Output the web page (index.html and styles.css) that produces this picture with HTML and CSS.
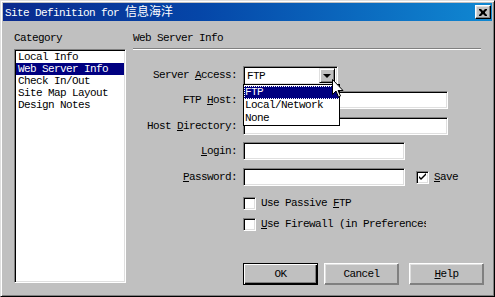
FILE: index.html
```html
<!DOCTYPE html>
<html lang="en">
<head>
    <meta charset="UTF-8">
    <title>Site Definition</title>
    <link rel="stylesheet" href="styles.css">
</head>
<body>
    <div class="window">
        <div class="title-bar">
            <span class="title-text">Site Definition for <span class="cjk">信息海洋</span></span>
            <button class="close-btn">
                <svg width="8" height="7" viewBox="0 0 8 7">
                    <path d="M0 0h2l2 2 2-2h2v1l-2 2v1l2 2v1h-2l-2-2-2 2h-2v-1l2-2v-1l-2-2z" fill="#000"/>
                </svg>
            </button>
        </div>

        <div class="main">
            <div class="side">
                <div class="caption">Category</div>
                <ul class="list-box">
                    <li>Local Info</li>
                    <li class="selected">Web Server Info</li>
                    <li>Check In/Out</li>
                    <li>Site Map Layout</li>
                    <li>Design Notes</li>
                </ul>
            </div>

            <div class="panel">
                <div class="caption">Web Server Info</div>
                <div class="rule"></div>

                <div class="form">
                    <label class="label">Server <u>A</u>ccess:</label>
                    <div class="combo-wrap">
                        <div class="combo">
                            <span class="combo-value">FTP</span>
                            <span class="combo-btn"><span class="arrow"></span></span>
                        </div>
                        <ul class="combo-list">
                            <li class="active">FTP</li>
                            <li>Local/Network</li>
                            <li>None</li>
                        </ul>
                    </div>

                    <label class="label">FTP <u>H</u>ost:</label>
                    <div class="field wide"></div>

                    <label class="label">Host <u>D</u>irectory:</label>
                    <div class="field wide"></div>

                    <label class="label"><u>L</u>ogin:</label>
                    <div class="field short"></div>

                    <label class="label"><u>P</u>assword:</label>
                    <div class="inline">
                        <div class="field short"></div>
                        <span class="check checked">
                            <svg width="9" height="9" viewBox="0 0 9 9">
                                <path d="M1 3v2l2 2 5-5v-2l-5 5z" fill="#000"/>
                            </svg>
                        </span>
                        <span class="check-text"><u>S</u>ave</span>
                    </div>

                    <div class="inline span-2">
                        <span class="check"></span>
                        <span class="check-text">Use Passive <u>F</u>TP</span>
                    </div>

                    <div class="inline span-2 clip">
                        <span class="check"></span>
                        <span class="check-text"><u>U</u>se Firewall (in Preferences)</span>
                    </div>

                    <div class="buttons span-2">
                        <button class="btn default">OK</button>
                        <button class="btn">Cancel</button>
                        <button class="btn help"><u>H</u>elp</button>
                    </div>
                </div>
            </div>
        </div>

        <svg class="cursor" width="12" height="20" viewBox="0 0 12 20">
            <path d="M0.5 0.5v15l3.5-3.5 2.5 6 2-1-2.5-5.5h5z" fill="#fff" stroke="#000" stroke-width="1"/>
        </svg>
    </div>
</body>
</html>
```

FILE: styles.css
```css
body {
    margin: 0;
    background: #c0c0c0;
}
.window {
    position: relative;
    width: 495px;
    height: 297px;
    box-sizing: border-box;
    padding: 2px;
    background: #c0c0c0;
    border: 1px solid;
    border-color: #dfdfdf #000 #000 #dfdfdf;
    box-shadow: inset 1px 1px #fff, inset -1px -1px #808080;
    font-family: "Liberation Mono", "Noto Sans CJK SC", monospace;
    font-size: 11px;
    letter-spacing: -0.6px;
    color: #000;
    overflow: hidden;
}
.title-bar {
    display: flex;
    align-items: center;
    justify-content: space-between;
    height: 18px;
    padding: 0 1px 0 2px;
    background: linear-gradient(90deg, #0a2a8e 0%, #0546a8 40%, #1088d2 100%);
    color: #fff;
}
.title-text {
    line-height: 18px;
}
.cjk {
    font-family: "Noto Sans CJK SC", sans-serif;
    font-size: 12px;
    letter-spacing: 0;
}
.close-btn {
    display: flex;
    align-items: center;
    justify-content: center;
    width: 16px;
    height: 14px;
    padding: 0;
    background: #c0c0c0;
    border: 1px solid;
    border-color: #fff #000 #000 #fff;
    box-shadow: inset -1px -1px #808080, inset 1px 1px #dfdfdf;
}
.main {
    display: grid;
    grid-template-columns: 112px 348px;
    column-gap: 7px;
    padding: 11px 0 0 11px;
}
.caption {
    line-height: 12px;
    height: 12px;
}
.list-box {
    list-style: none;
    margin: 5px 0 0;
    padding: 0 1px;
    height: 234px;
    box-sizing: border-box;
    background: #fff;
    border: 1px solid;
    border-color: #808080 #fff #fff #808080;
    box-shadow: inset 1px 1px #000, inset -1px -1px #dfdfdf;
}
.list-box li {
    line-height: 12px;
    padding-left: 2px;
    white-space: nowrap;
}
.list-box li:first-child {
    margin-top: 1px;
}
.list-box .selected {
    background: #000080;
    color: #fff;
}
.rule {
    margin-top: 4px;
    height: 0;
    border-top: 1px solid #808080;
    border-bottom: 1px solid #fff;
}
.form {
    display: grid;
    grid-template-columns: 104px 1fr;
    grid-template-rows: 25px 26px 25px 26px 29px 21px 45px 22px;
    column-gap: 6px;
    margin-top: 16px;
    align-items: start;
}
.label {
    text-align: right;
    line-height: 18px;
    white-space: nowrap;
}
.span-2 {
    grid-column: 2;
}
.field {
    height: 18px;
    box-sizing: border-box;
    background: #fff;
    border: 1px solid;
    border-color: #808080 #fff #fff #808080;
    box-shadow: inset 1px 1px #000, inset -1px -1px #dfdfdf;
}
.wide {
    width: 205px;
}
.short {
    width: 162px;
}
.combo-wrap {
    position: relative;
}
.combo {
    display: flex;
    align-items: center;
    justify-content: space-between;
    width: 95px;
    height: 19px;
    box-sizing: border-box;
    padding: 2px;
    background: #fff;
    border: 1px solid;
    border-color: #808080 #fff #fff #808080;
    box-shadow: inset 1px 1px #000, inset -1px -1px #dfdfdf;
}
.combo-value {
    padding-left: 1px;
    line-height: 14px;
}
.combo-btn {
    display: flex;
    align-items: center;
    justify-content: center;
    width: 16px;
    height: 15px;
    box-sizing: border-box;
    background: #c0c0c0;
    border: 1px solid;
    border-color: #dfdfdf #000 #000 #dfdfdf;
    box-shadow: inset 1px 1px #fff, inset -1px -1px #808080;
}
.arrow {
    width: 0;
    height: 0;
    border-left: 4px solid transparent;
    border-right: 4px solid transparent;
    border-top: 4px solid #000;
}
.combo-list {
    position: absolute;
    top: 18px;
    left: 0;
    width: 97px;
    margin: 0;
    padding: 0;
    list-style: none;
    background: #fff;
    border: 1px solid #000;
    box-sizing: border-box;
    z-index: 2;
}
.combo-list li {
    line-height: 13px;
    padding-left: 1px;
    border: 1px solid transparent;
    border-width: 0 0 0 0;
}
.combo-list .active {
    background: #000080;
    color: #fff;
    outline: 1px dotted #fff;
    outline-offset: -1px;
    margin-top: 1px;
}
.inline {
    display: flex;
    align-items: center;
    height: 18px;
    white-space: nowrap;
}
.span-2.inline {
    height: 13px;
}
.clip {
    width: 183px;
    overflow: hidden;
}
.check {
    display: inline-flex;
    align-items: center;
    justify-content: center;
    width: 13px;
    height: 13px;
    box-sizing: border-box;
    background: #fff;
    border: 1px solid;
    border-color: #808080 #fff #fff #808080;
    box-shadow: inset 1px 1px #000, inset -1px -1px #dfdfdf;
    flex-shrink: 0;
}
.field + .check {
    margin-left: 11px;
}
.check-text {
    margin-left: 5px;
    line-height: 13px;
}
.buttons {
    display: flex;
    gap: 6px;
}
.btn {
    width: 75px;
    height: 22px;
    padding: 0;
    font: inherit;
    letter-spacing: inherit;
    color: #000;
    background: #c0c0c0;
    border: 1px solid;
    border-color: #fff #808080 #808080 #fff;
    box-shadow: inset -1px -1px #808080, inset 1px 1px #dfdfdf;
}
.btn.default {
    border-color: #000;
    box-shadow: inset 1px 1px #fff, inset -1px -1px #000, inset -2px -2px #808080;
}
.btn.help {
    margin-left: 4px;
}
.cursor {
    position: absolute;
    left: 331px;
    top: 78px;
    z-index: 3;
}
```
